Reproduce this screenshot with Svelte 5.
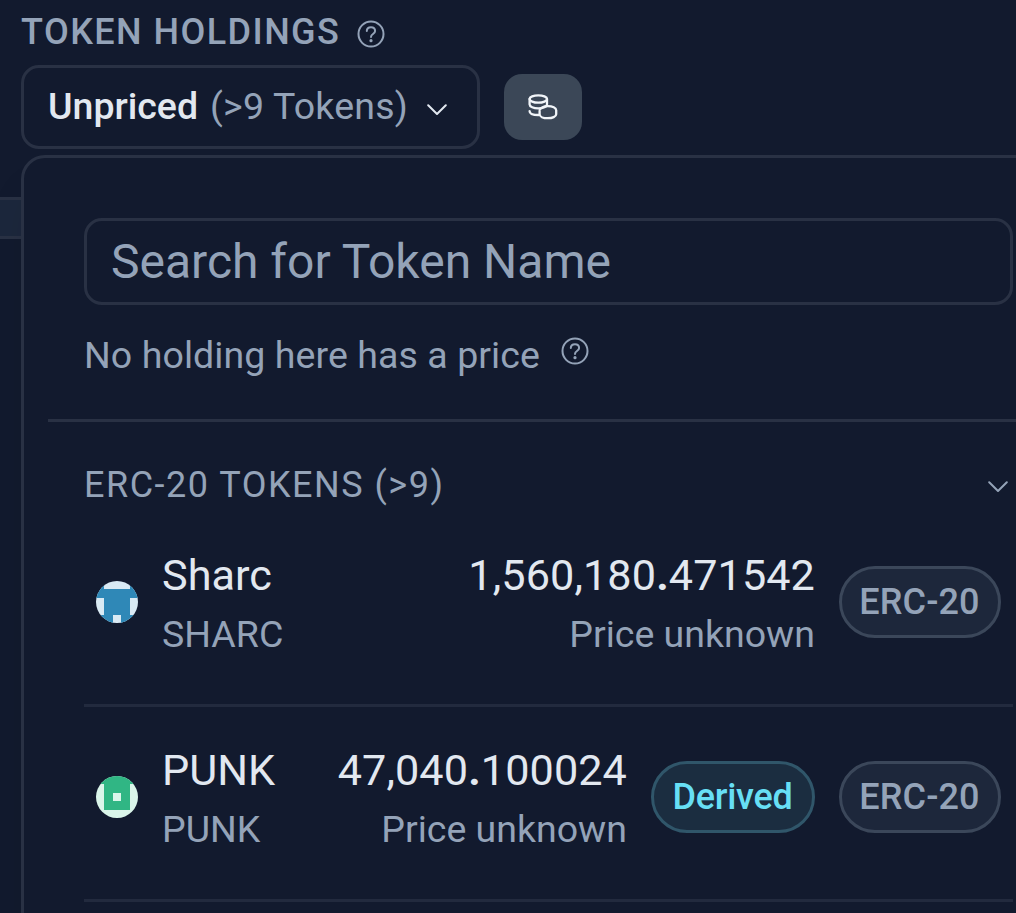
<script>
  const tokens = [
    { name: 'Sharc', symbol: 'SHARC', whole: '1,560,180', fraction: '471542', derived: false, colors: ['#d9eaf4', '#2f88b7'], cells: 'M0 0h1v1h3v-1h1v2h-1v2h1v1h-2v-1h-1v1h-2v-1h1v-2h-1z' },
    { name: 'PUNK', symbol: 'PUNK', whole: '47,040', fraction: '100024', derived: true, colors: ['#daf5ea', '#30b684'], cells: 'M0 0h5v1h-1v3h-3v-3h-1zM2 2v1h1v-1z' }
  ];
</script>

{#snippet help()}
  <svg class="help" viewBox="0 0 28 28" width="28" height="28" fill="none" stroke="currentColor" stroke-width="2" stroke-linecap="round">
    <circle cx="14" cy="14" r="12.5" />
    <path d="M9.8 11.1C9.8 8.6 11.5 7.2 14 7.2s4.1 1.5 4.1 3.7c0 3.1-4.1 3.1-4.1 6" />
    <circle cx="14" cy="20.7" r="1.6" fill="currentColor" stroke="none" />
  </svg>
{/snippet}

{#snippet chevron()}
  <svg class="chevron" viewBox="0 0 20 12" width="20" height="12" fill="none" stroke="currentColor" stroke-width="2" stroke-linecap="round" stroke-linejoin="round">
    <path d="M1.2 1.3L10 10l8.8-8.7" />
  </svg>
{/snippet}

<main>
  <div class="backdrop"></div>
  <header><h1>TOKEN HOLDINGS</h1>{@render help()}</header>
  <div class="controls">
    <button class="select"><b>Unpriced</b><span>(&gt;9 Tokens)</span>{@render chevron()}</button>
    <button class="wallet" aria-label="Holdings">
      <svg viewBox="0 0 30 26" width="30" height="26" fill="none" stroke="currentColor" stroke-width="2.3" stroke-linecap="round">
        <ellipse cx="10.3" cy="5" rx="8.7" ry="3.7" />
        <path d="M1.6 5v5.5c0 2.2 3.9 3.8 8.7 3.8s8.7-1.6 8.7-3.8V5" />
        <path d="M1.6 17.2c0 2.4 4 3.8 9 3.8" />
        <path d="M11.6 17.2v3c0 2.4 3.6 4 8.2 4s8.4-1.6 8.4-4v-4c0-2.4-3.7-4-8.4-4-4.3 0-8.2 1.9-8.2 4" />
      </svg>
    </button>
  </div>

  <section class="menu">
    <div class="search">Search for Token Name</div>
    <div class="info"><span>No holding here has a price</span>{@render help()}</div>
    <div class="group"><h2>ERC-20 TOKENS (&gt;9)</h2>{@render chevron()}</div>
    <ul>
      {#each tokens as t}
        <li>
          <svg class="avatar" viewBox="0 0 5 5" width="42" height="42" shape-rendering="crispEdges">
            <rect width="5" height="5" fill={t.colors[0]} />
            <path d={t.cells} fill={t.colors[1]} fill-rule="evenodd" />
          </svg>
          <div class="name"><strong>{t.name}</strong><small>{t.symbol}</small></div>
          <div class="amount"><strong>{t.whole}<b>.</b>{t.fraction}</strong><small>Price unknown</small></div>
          {#if t.derived}<span class="badge derived">Derived</span>{/if}
          <span class="badge">ERC-20</span>
        </li>
      {/each}
    </ul>
  </section>
</main>

<style>
  :global(body) { margin: 0; background: #121a2e; }
  main {
    position: relative; box-sizing: border-box; width: 1016px; height: 913px; overflow: hidden;
    background: #121a2e; color: #94a3b8; font-family: Roboto, sans-serif; white-space: nowrap;
  }
  svg { display: block; flex: none; }
  header { display: flex; align-items: center; height: 65px; padding-left: 21px; gap: 17.5px; }
  h1 { margin: 0; font-size: 36px; font-weight: 500; letter-spacing: 1.44px; line-height: 64px; height: 65px; width: 318px; }
  header .help { margin-top: 2px; }
  .controls { display: flex; align-items: center; gap: 24px; padding-left: 21px; height: 84px; }
  button { font: inherit; color: inherit; padding: 0; margin: 0; box-sizing: border-box; background: none; }
  .select {
    width: 459px; height: 84px; border: 3px solid #293144; border-radius: 18px;
    display: flex; align-items: center; padding-left: 24px; font-size: 37.5px;
  }
  .select b { font-weight: 500; color: #e2e8f0; width: 162px; text-align: left; margin-top: -2px; }
  .select span { width: 216.5px; text-align: left; letter-spacing: .22px; margin-top: -2px; }
  .select .chevron { color: #e2e8f0; margin-top: 5px; }
  .wallet {
    width: 78px; height: 66px; border: 0; border-radius: 18px; background: #3b4757; color: #f1f5f9;
    display: flex; align-items: center; justify-content: center;
  }
  .backdrop {
    position: absolute; left: -12px; top: 197px; width: 80px; height: 36px;
    border: 3px solid #293144; border-radius: 12px 0 0 0; background: #1c273c;
  }
  .menu {
    position: absolute; left: 21px; top: 155px; box-sizing: border-box; width: 1058px; height: 900px;
    padding: 60px 63px 0 60px; border: 3px solid #293144; border-radius: 24px; background: #121a2e;
    box-shadow: 0 30px 45px -9px rgba(0, 0, 0, .1);
  }
  .search {
    box-sizing: border-box; width: 929px; height: 87px; border: 3px solid #293144; border-radius: 18px;
    padding-left: 24px; font-size: 48px; line-height: 81px;
  }
  .info {
    display: flex; align-items: center; height: 114px; width: 1020px; box-sizing: border-box;
    margin: 3px 0 0 -36px; padding: 0 0 17px 36px; border-bottom: 3px solid #293144; gap: 20.5px; font-size: 37.5px; letter-spacing: .08px;
  }
  .info .help { margin-top: -8px; }
  .group { display: flex; align-items: center; justify-content: space-between; width: 923.5px; height: 72px; padding-top: 27px; }
  h2 { margin: 0; font-size: 36px; font-weight: 400; letter-spacing: 1.5px; line-height: 72px; }
  .group .chevron { margin-top: 4px; }
  ul { list-style: none; margin: -9px 0 0; padding: 0; width: 929px; }
  li {
    box-sizing: border-box; display: flex; align-items: center; height: 195px; border-bottom: 3px solid #222a3e;
    padding: 0 12px 12px;
  }
  .avatar { border-radius: 50%; margin-right: 24px; }
  .name, .amount { display: flex; flex-direction: column; margin-top: 3px; }
  .amount { margin-left: auto; margin-right: 1px; align-items: flex-end; }
  .amount + .badge { margin-left: 23px; }
  .amount strong { letter-spacing: .1px; }
  strong { font-weight: 400; font-size: 43.2px; line-height: 61px; margin-bottom: -1px; color: #e2e8f0; }
  strong b { font-weight: 700; }
  small { font-size: 37.5px; line-height: 58px; }
  .badge {
    box-sizing: border-box; width: 162px; height: 72px; border: 3px solid #3b475a; border-radius: 36px; background: #1d273b;
    margin-left: 24px; text-align: center; font-size: 36px; font-weight: 500; line-height: 67px; letter-spacing: .1px; padding-right: 1px;
  }
  .derived { width: 164px; color: #67dff5; background: #1b2d40; border-color: #30566a; letter-spacing: -.3px; }
</style>
